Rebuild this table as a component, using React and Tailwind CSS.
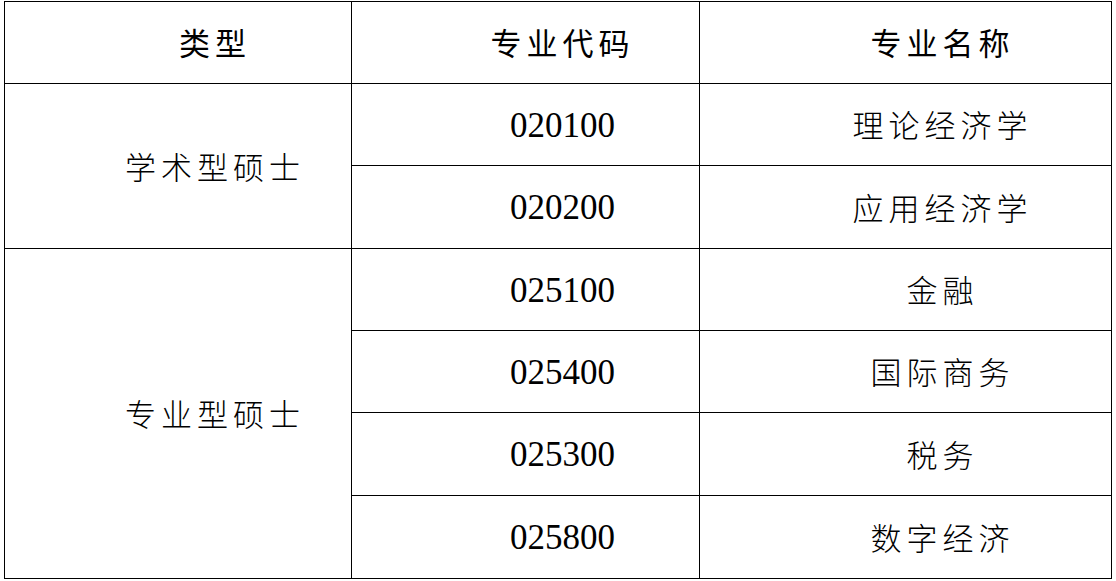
import { Fragment } from "react";

export default function App() {
  const cjk = "font-['Noto_Sans_CJK_SC',sans-serif]";
  const cell = "bg-white flex items-center justify-center pl-[74px]";
  const head = `${cell} ${cjk} text-[31px] tracking-[5px] font-normal text-black`;
  const zh = `${cell} ${cjk} text-[31px] tracking-[5px] font-light text-black`;
  const num = `${cell} pt-[3px] font-['Liberation_Serif',serif] text-[35px] text-black`;
  const rows = [
    ["020100", "理论经济学"],
    ["020200", "应用经济学"],
    ["025100", "金融"],
    ["025400", "国际商务"],
    ["025300", "税务"],
    ["025800", "数字经济"],
  ];
  return (
    <div className="w-[1116px] h-[581px] bg-white pt-[1px] pl-[4px]">
      <div className="grid w-[1108px] grid-cols-[346px_347px_411px] grid-rows-[81px_81px_82px_81px_81px_82px_82px] gap-[1px] p-[1px] bg-black">
        <div className={head}>类型</div>
        <div className={head}>专业代码</div>
        <div className={head}>专业名称</div>
        <div className={`${zh} row-span-2`}>学术型硕士</div>
        <div className={num}>{rows[0][0]}</div>
        <div className={zh}>{rows[0][1]}</div>
        <div className={num}>{rows[1][0]}</div>
        <div className={zh}>{rows[1][1]}</div>
        <div className={`${zh} row-span-4`}>专业型硕士</div>
        {rows.slice(2).map(([c, n]) => (
          <Fragment key={c}>
            <div className={num}>{c}</div>
            <div className={zh}>{n}</div>
          </Fragment>
        ))}
      </div>
    </div>
  );
}
